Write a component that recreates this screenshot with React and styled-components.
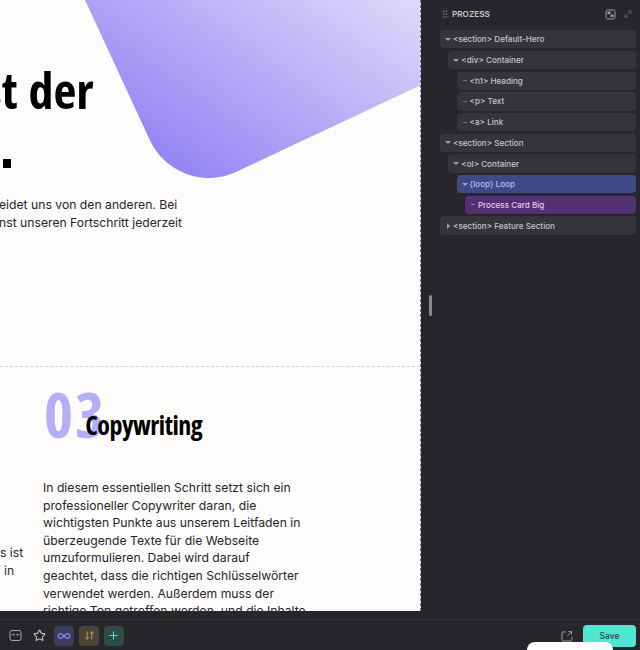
import React from 'react';
import styled, { createGlobalStyle } from 'styled-components';
import { Star, Infinity as InfinityIcon, ArrowDownUp, Plus, GripVertical, MoveDiagonal } from 'lucide-react';

const GlobalStyle = createGlobalStyle`
  html, body {
    margin: 0;
    padding: 0;
    background: #27272b;
    font-family: 'Inter', 'Liberation Sans', sans-serif;
  }
`;

const displayFont = `'Open Sans', 'Liberation Sans', sans-serif`;

const Shell = styled.div`
  position: relative;
  width: 640px;
  height: 650px;
  overflow: hidden;
  display: flex;
  flex-direction: column;
  background: #27272b;
`;

const Workspace = styled.div`
  display: flex;
  height: 611px;
`;

const Canvas = styled.main`
  width: 420px;
  height: 611px;
  overflow: hidden;
  background: #fdfcfb;
  border-right: 1px dashed #5f86b8;
`;

const Hero = styled.section`
  position: relative;
  height: 367px;
  border-bottom: 1px dashed #c9d6f2;
  padding-top: 58px;
  box-sizing: border-box;
`;

const Blob = styled.svg`
  position: absolute;
  top: 0;
  left: 0;
`;

const HeroTitle = styled.h1`
  margin: 0 0 0 -17px;
  font-family: ${displayFont};
  font-stretch: 75%;
  font-weight: 700;
  font-size: 50px;
  line-height: 64px;
  word-spacing: 2px;
  color: #000;
  white-space: nowrap;
`;

const TitleDot = styled.div`
  width: 8px;
  height: 9px;
  margin: 37px 0 28px 3px;
  background: #000;
`;

const HeroLine = styled.div`
  margin-left: ${(props) => props.offset}px;
  font-size: 12.2px;
  line-height: 18px;
  color: #26262a;
  white-space: nowrap;
`;

const CardRow = styled.section`
  display: flex;
`;

const PrevCard = styled.div`
  width: 43px;
  flex: none;
  padding-top: 177px;
  font-size: 12.2px;
  line-height: 17.6px;
  color: #26262a;
  white-space: nowrap;
`;

const PrevLine = styled.div`
  padding-left: ${(props) => props.indent}px;
`;

const Card = styled.article`
  padding-top: 20px;
  width: 270px;
`;

const CardHead = styled.div`
  display: flex;
  align-items: flex-start;
  height: 92px;
  padding-left: 1px;
`;

const Number = styled.div`
  font-family: ${displayFont};
  font-stretch: 75%;
  font-weight: 700;
  font-size: 62px;
  line-height: 54px;
  letter-spacing: 2px;
  color: #b5aef8;
`;

const CardTitle = styled.h2`
  margin: 22px 0 0 -21px;
  font-family: ${displayFont};
  font-stretch: 75%;
  font-weight: 700;
  font-size: 26px;
  line-height: 32px;
  letter-spacing: -0.5px;
  color: #000;
`;

const CardText = styled.p`
  margin: 0;
  font-size: 12.2px;
  line-height: 17.6px;
  color: #26262a;
`;

const Panel = styled.aside`
  position: relative;
  flex: 1;
  padding: 0 4px 0 19px;
`;

const Handle = styled.div`
  position: absolute;
  top: 295px;
  left: 8px;
  width: 3px;
  height: 21px;
  border-radius: 2px;
  background: #8a8a8e;
`;

const PanelHead = styled.header`
  display: flex;
  align-items: center;
  height: 28px;
  margin-bottom: 2.3px;
  color: #c9c9cd;
`;

const PanelTitle = styled.span`
  flex: 1;
  margin-left: 2px;
  font-size: 8.2px;
  font-weight: 600;
`;

const PanelTool = styled.svg`
  margin-right: 7px;
  color: #9c9ca0;
`;

const TreeRow = styled.div`
  display: flex;
  align-items: center;
  gap: 2px;
  height: 18.2px;
  margin: 0 0 2.5px ${(props) => props.depth * 8.3}px;
  padding-left: 5px;
  border-radius: 4px;
  font-size: 8.1px;
  font-weight: 500;
  white-space: nowrap;
  background: ${(props) =>
    props.kind === 'loop' ? '#3d4a85' : props.kind === 'card' ? '#53306f' : '#343439'};
  color: ${(props) =>
    props.kind === 'loop' ? '#b3c0f7' : props.kind === 'card' ? '#efc3f7' : '#c6c6ca'};
`;

const Caret = styled.span`
  flex: none;
  width: 6px;
  height: 5px;
  display: flex;
  align-items: center;
  justify-content: center;
  opacity: 0.75;

  &::before {
    content: '';
    display: block;
    ${(props) =>
      props.state === 'open'
        ? 'border-left: 3px solid transparent; border-right: 3px solid transparent; border-top: 3.5px solid currentColor;'
        : props.state === 'closed'
        ? 'border-top: 3px solid transparent; border-bottom: 3px solid transparent; border-left: 3.5px solid currentColor;'
        : 'width: 4px; height: 1px; background: currentColor; opacity: 0.6;'}
  }
`;

const BottomBar = styled.footer`
  flex: 1;
  display: flex;
  align-items: center;
  box-sizing: border-box;
  margin-top: 8px;
  border-top: 1px solid #333337;
  padding: 4px 4px 3px 5px;
  gap: 4.7px;
  color: #c4c4c8;
`;

const BarIcon = styled.button`
  width: 20px;
  height: 20px;
  display: flex;
  align-items: center;
  justify-content: center;
  padding: 0;
  border: 0;
  border-radius: 4px;
  background: ${(props) => props.bg || 'transparent'};
  color: ${(props) => props.fg || '#c4c4c8'};
`;

const Spacer = styled.div`
  flex: 1;
`;

const SaveButton = styled.button`
  width: 53px;
  height: 22px;
  margin-left: 1px;
  border: 0;
  border-radius: 4px;
  background: #4fe6d4;
  color: #1f4a47;
  font-family: inherit;
  font-size: 8.5px;
  font-weight: 500;
`;

const Popup = styled.div`
  position: absolute;
  left: 527px;
  top: 642px;
  width: 86px;
  height: 30px;
  border-radius: 8px;
  background: #fff;
`;

const tree = [
  { depth: 0, caret: 'open', label: '<section> Default-Hero' },
  { depth: 1, caret: 'open', label: '<div> Container' },
  { depth: 2, caret: 'leaf', label: '<h1> Heading' },
  { depth: 2, caret: 'leaf', label: '<p> Text' },
  { depth: 2, caret: 'leaf', label: '<a> Link' },
  { depth: 0, caret: 'open', label: '<section> Section' },
  { depth: 1, caret: 'open', label: '<ol> Container' },
  { depth: 2, caret: 'open', label: '{loop} Loop', kind: 'loop' },
  { depth: 3, caret: 'leaf', label: 'Process Card Big', kind: 'card' },
  { depth: 0, caret: 'closed', label: '<section> Feature Section' },
];

const cardLines = [
  'In diesem essentiellen Schritt setzt sich ein',
  'professioneller Copywriter daran, die',
  'wichtigsten Punkte aus unserem Leitfaden in',
  'überzeugende Texte für die Webseite',
  'umzuformulieren. Dabei wird darauf',
  'geachtet, dass die richtigen Schlüsselwörter',
  'verwendet werden. Außerdem muss der',
  'richtige Ton getroffen werden, und die Inhalte',
];

const App = () => {
  return (
    <Shell>
      <GlobalStyle />
      <Workspace>
        <Canvas>
          <Hero>
            <Blob width="420" height="180" viewBox="0 0 420 180">
              <defs>
                <linearGradient id="blob" gradientUnits="userSpaceOnUse" x1="190" y1="180" x2="340" y2="-40">
                  <stop offset="0" stopColor="#9485f3" />
                  <stop offset="1" stopColor="#dcd6fa" />
                </linearGradient>
              </defs>
              <path d="M85 0 L150 140.5 A65 65 0 0 0 236 172 L421 85 V0 Z" fill="url(#blob)" />
            </Blob>
            <HeroTitle>st der</HeroTitle>
            <TitleDot />
            <HeroLine offset={-1}>eidet uns von den anderen. Bei</HeroLine>
            <HeroLine offset={-1}>nst unseren Fortschritt jederzeit</HeroLine>
          </Hero>
          <CardRow>
            <PrevCard>
              <PrevLine indent={0}>s ist</PrevLine>
              <PrevLine indent={4}>in</PrevLine>
            </PrevCard>
            <Card>
              <CardHead>
                <Number>03</Number>
                <CardTitle>Copywriting</CardTitle>
              </CardHead>
              <CardText>
                {cardLines.map((line) => (
                  <React.Fragment key={line}>
                    {line}
                    <br />
                  </React.Fragment>
                ))}
              </CardText>
            </Card>
          </CardRow>
        </Canvas>
        <Panel>
          <Handle />
          <PanelHead>
            <GripVertical size={10} color="#77777b" />
            <PanelTitle>PROZESS</PanelTitle>
            <PanelTool width="11" height="11" viewBox="0 0 11 11" fill="none" stroke="currentColor">
              <rect x="1" y="1" width="9" height="9" rx="1.5" />
              <rect x="2.5" y="2.5" width="3" height="2.5" fill="currentColor" stroke="none" />
              <rect x="5.5" y="5.5" width="3" height="2.5" fill="currentColor" stroke="none" />
            </PanelTool>
            <MoveDiagonal size={10} color="#66666a" style={{ marginRight: 3 }} />
          </PanelHead>
          {tree.map((row) => (
            <TreeRow key={row.label} depth={row.depth} kind={row.kind}>
              <Caret state={row.caret} />
              {row.label}
            </TreeRow>
          ))}
        </Panel>
      </Workspace>
      <BottomBar>
        <BarIcon fg="#a5a5a9">
          <svg width="13" height="13" viewBox="0 0 13 13" fill="none" stroke="currentColor">
            <rect x="1" y="1.5" width="11" height="10" rx="2" />
            <path d="M3.2 5.5h2.4M7.4 5.5h2.4" strokeWidth="1" />
            <path d="M4.4 5v1.4M8.6 5v1.4" strokeWidth="1" />
          </svg>
        </BarIcon>
        <BarIcon>
          <Star size={13} />
        </BarIcon>
        <BarIcon bg="#3a3c5c" fg="#7d86e0">
          <InfinityIcon size={14} />
        </BarIcon>
        <BarIcon bg="#4b4535" fg="#c0a562">
          <ArrowDownUp size={11} />
        </BarIcon>
        <BarIcon bg="#2b4a48" fg="#62d0c2">
          <Plus size={13} />
        </BarIcon>
        <Spacer />
        <BarIcon fg="#9a9a9e">
          <svg width="12" height="12" viewBox="0 0 12 12" fill="none" stroke="currentColor">
            <path d="M5 2H2a1 1 0 0 0-1 1v7a1 1 0 0 0 1 1h8a1 1 0 0 0 1-1V7" />
            <path d="M6.5 5.5 10.5 1.5M7.5 1.5h3v3" />
          </svg>
        </BarIcon>
        <SaveButton>Save</SaveButton>
      </BottomBar>
      <Popup />
    </Shell>
  );
};

export default App;
